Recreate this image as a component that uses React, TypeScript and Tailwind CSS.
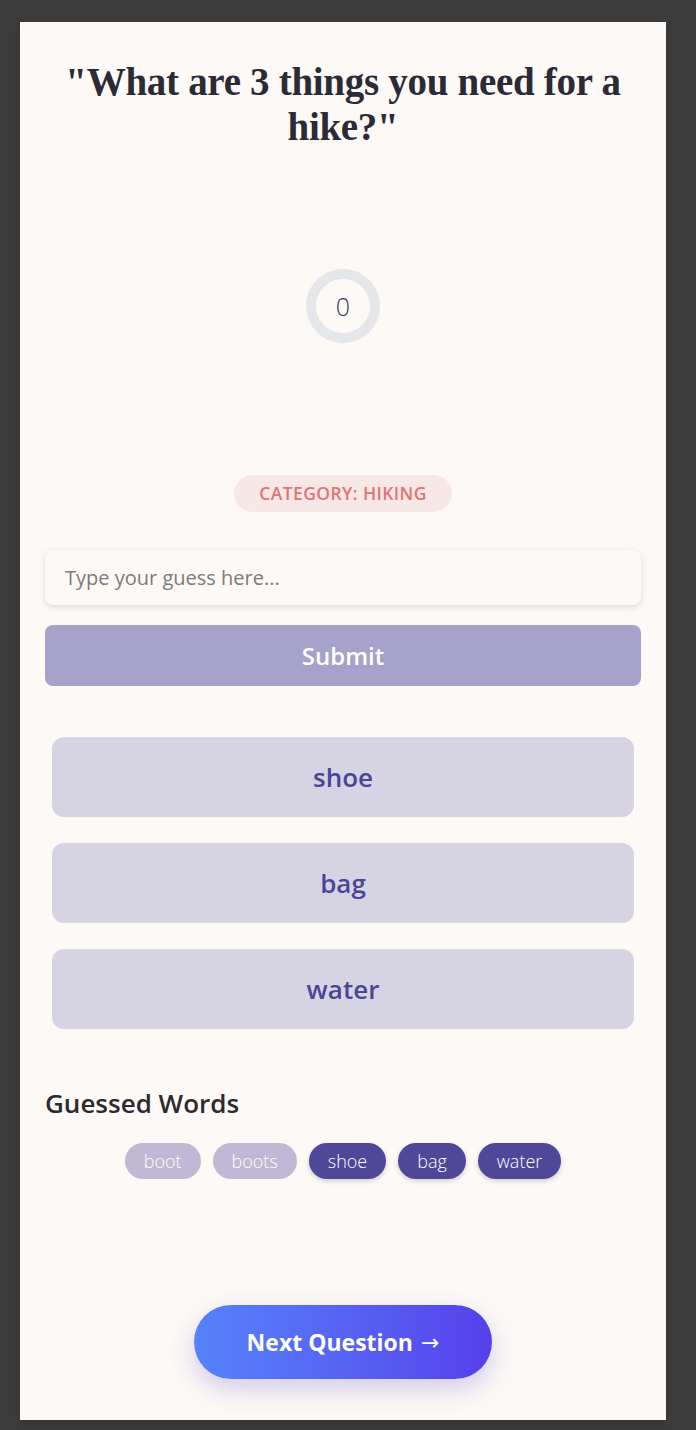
import React, { useState } from "react";

const answers = ["shoe", "bag", "water"];

const guesses = [
  { word: "boot", correct: false },
  { word: "boots", correct: false },
  { word: "shoe", correct: true },
  { word: "bag", correct: true },
  { word: "water", correct: true },
];

export default function App() {
  const [guess, setGuess] = useState("");

  return (
    <div className="min-h-screen bg-[#3b3b3b] px-[20px] pt-[22px] pb-[10px] font-['Open_Sans',sans-serif]">
      <div className="w-[646px] h-[1398px] bg-[#fdf9f6] px-[25px] pt-[37px] flex flex-col shadow-md">
        {/* Question */}
        <h1 className="text-center text-[39px] leading-[45px] font-bold text-[#2b2b36] font-['Liberation_Serif',serif] tracking-[-0.3px]">
          "What are 3 things you need for a hike?"
        </h1>

        {/* Score ring */}
        <div className="mt-[120px] flex justify-center">
          <div className="w-[74px] h-[74px] rounded-full border-[10px] border-[#e5e7eb] flex items-center justify-center">
            <span className="text-[25px] font-light text-[#2f3a5c] leading-none">0</span>
          </div>
        </div>

        {/* Category */}
        <div className="mt-[132px] flex justify-center">
          <span className="h-[37px] px-[25px] rounded-full bg-[#f8e7e7] text-[#e07474] text-[17.5px] font-semibold uppercase tracking-[0.4px] flex items-center">
            Category: Hiking
          </span>
        </div>

        {/* Input */}
        <input
          value={guess}
          onChange={(e) => setGuess(e.target.value)}
          placeholder="Type your guess here..."
          className="mt-[38px] h-[55px] w-full rounded-lg bg-[#fdf9f6] px-[20px] text-[20px] text-gray-800 placeholder-[#7b7b7b] shadow-[0_2px_6px_rgba(0,0,0,0.12)] outline-none"
        />

        <button className="mt-[20px] h-[61px] w-full rounded-lg bg-[#a7a2c9] text-white text-[24px] font-semibold">
          Submit
        </button>

        {/* Answer slots */}
        <div className="mt-[51px] px-[7px] flex flex-col gap-[26px]">
          {answers.map((a) => (
            <div
              key={a}
              className="h-[80px] rounded-xl bg-[#d6d3e3] flex items-center justify-center text-[26px] font-semibold text-[#4b4597]"
            >
              {a}
            </div>
          ))}
        </div>

        {/* Guessed words */}
        <h2 className="mt-[58px] text-[26px] leading-[32px] font-semibold text-[#2b2b30]">Guessed Words</h2>
        <div className="mt-[24px] flex justify-center gap-[12px]">
          {guesses.map((g) => (
            <span
              key={g.word}
              className={
                g.correct
                  ? "h-[36px] px-[19px] rounded-full bg-[#4f4899] text-white text-[18px] font-light flex items-center shadow-[0_2px_5px_rgba(0,0,0,0.18)]"
                  : "h-[36px] px-[19px] rounded-full bg-[#c1b8d6] text-white text-[18px] font-light flex items-center"
              }
            >
              {g.word}
            </span>
          ))}
        </div>

        <div className="mt-auto mb-[41px] flex justify-center">
          <button className="w-[298px] h-[74px] rounded-full bg-gradient-to-r from-[#5682fb] to-[#553fea] text-white text-[23px] font-bold shadow-[0_10px_24px_rgba(80,70,200,0.25)] flex items-center justify-center gap-[8px]">
            Next Question <span className="font-['DejaVu_Sans',sans-serif] font-normal text-[22px]">→</span>
          </button>
        </div>
      </div>
    </div>
  );
}
